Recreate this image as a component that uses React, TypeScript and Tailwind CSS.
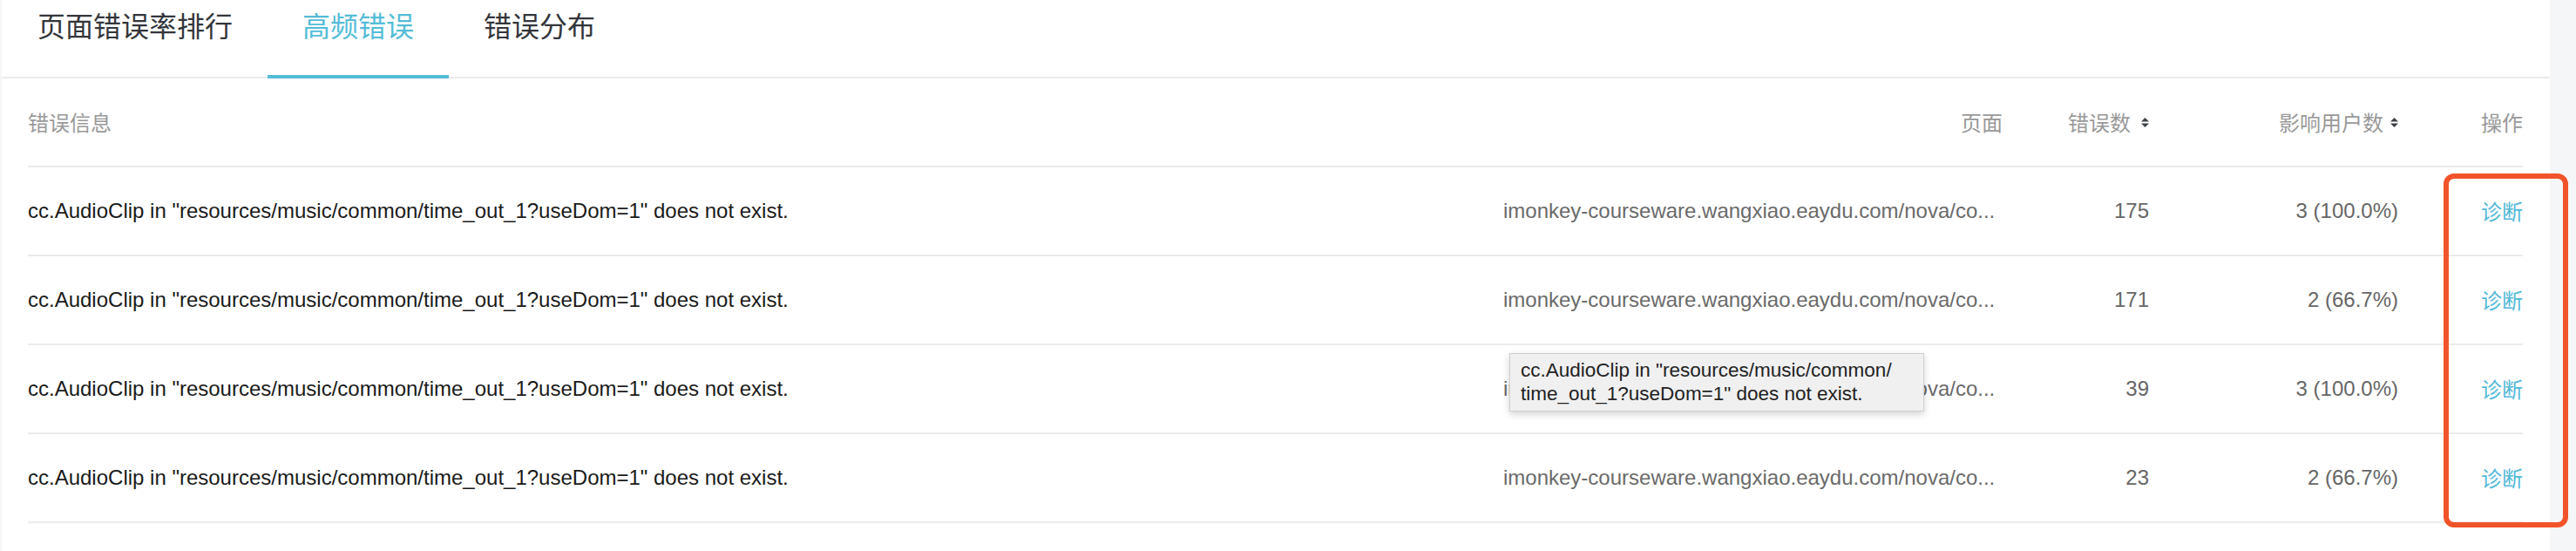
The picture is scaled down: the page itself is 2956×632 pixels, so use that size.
import React from "react";

const rows = [
  { count: "175", users: "3 (100.0%)" },
  { count: "171", users: "2 (66.7%)" },
  { count: "39", users: "3 (100.0%)" },
  { count: "23", users: "2 (66.7%)" },
];

const MSG = 'cc.AudioClip in "resources/music/common/time_out_1?useDom=1" does not exist.';
const URL = "imonkey-courseware.wangxiao.eaydu.com/nova/co...";

const cjk = { fontFamily: '"Noto Sans CJK SC", "Noto Sans", sans-serif' };
const latin = { fontFamily: '"Liberation Sans", Arial, "Noto Sans CJK SC", sans-serif' };

function SortIcon() {
  return (
    <svg width="9" height="11" viewBox="0 0 9 11" className="shrink-0">
      <polygon points="0,4.5 4.5,0 9,4.5" fill="#3d4047" />
      <polygon points="0,6.5 9,6.5 4.5,11" fill="#3d4047" />
    </svg>
  );
}

export default function App() {
  const cols = "grid grid-cols-[1693px_573px_168px_286px_143px]";
  return (
    <div className="relative w-[2956px] h-[632px] bg-[#f5f6f8] overflow-hidden">
      <div className="ml-[2px] w-[2924px] h-full bg-white">
        {/* tabs */}
        <div className="flex h-[90px] border-b-2 border-[#ebebeb] pl-[1px]" style={cjk}>
          <div className="relative px-[40px] pt-[12px] text-[32px] leading-[32px] text-[#33363b]">页面错误率排行</div>
          <div className="relative px-[40px] pt-[12px] text-[32px] leading-[32px] text-[#54bcd7]">
            高频错误
            <div className="absolute left-0 right-0 bottom-[-2px] h-[4px] bg-[#54bcd7]" />
          </div>
          <div className="relative px-[40px] pt-[12px] text-[32px] leading-[32px] text-[#33363b]">错误分布</div>
        </div>

        {/* table */}
        <div className="ml-[30px] w-[2863px]">
          <div className={`${cols} h-[102px] border-b-2 border-[#ebebeb] items-center text-[24px] text-[#999]`} style={cjk}>
            <div>错误信息</div>
            <div className="text-right">页面</div>
            <div className="flex items-center justify-end gap-[12px]">
              <span>错误数</span>
              <SortIcon />
            </div>
            <div className="flex items-center justify-end gap-[8px]">
              <span>影响用户数</span>
              <SortIcon />
            </div>
            <div className="text-right">操作</div>
          </div>
          {rows.map((r, i) => (
            <div key={i} className={`${cols} h-[102px] border-b-2 border-[#ebebeb] items-center text-[24px]`} style={latin}>
              <div className="text-[#1a1a1a] whitespace-nowrap">{MSG}</div>
              <div className="text-[#6a6a6a] whitespace-nowrap">{URL}</div>
              <div className="text-right text-[#666]">{r.count}</div>
              <div className="text-right text-[#666]">{r.users}</div>
              <div className="text-right text-[#52b8d8]" style={cjk}>诊断</div>
            </div>
          ))}
        </div>
      </div>

      {/* tooltip */}
      <div
        className="absolute left-[1732px] top-[405px] w-[476px] h-[67px] bg-[#f0f0f0] border border-[#cfcfcf] shadow-[0_3px_8px_rgba(0,0,0,0.18)] px-[12px] pt-[5px] text-[22.5px] leading-[27px] text-[#222]"
        style={latin}
      >
        <div className="whitespace-nowrap">cc.AudioClip in "resources/music/common/</div>
        <div className="whitespace-nowrap">time_out_1?useDom=1" does not exist.</div>
      </div>

      {/* annotation box */}
      <div className="absolute left-[2804px] top-[199px] w-[143px] h-[406px] border-[6px] border-[#f1542a] rounded-[12px]" />
    </div>
  );
}
